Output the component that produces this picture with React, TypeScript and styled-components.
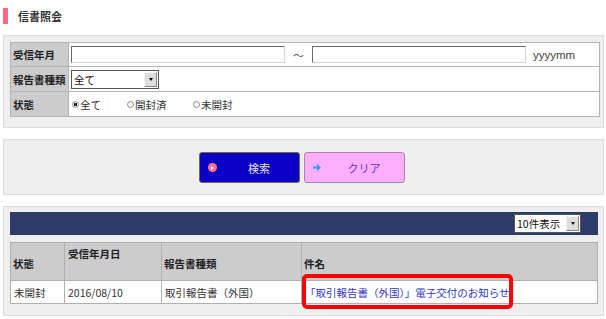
import React from "react";
import styled, { createGlobalStyle } from "styled-components";

const GlobalStyle = createGlobalStyle`
  body {
    margin: 0;
    background: #ffffff;
    font-family: "Noto Sans CJK JP", "Noto Sans", sans-serif;
    font-size: 10.5px;
    color: #222222;
  }
`;

const Page = styled.div`
  width: 606px;
  padding-left: 3px;
  box-sizing: border-box;
`;

const TitleBar = styled.div`
  display: flex;
  align-items: center;
  gap: 10px;
  height: 35px;
  padding-bottom: 3px;
  box-sizing: border-box;
`;

const TitleMark = styled.span`
  width: 5px;
  height: 16px;
  background: #ff6b86;
`;

const Title = styled.h1`
  margin: 0;
  font-size: 11px;
  font-weight: bold;
  color: #333333;
`;

const Section = styled.div<{ $height: number; $pad: string; $gap?: number }>`
  width: 601px;
  height: ${({ $height }) => $height}px;
  margin-bottom: ${({ $gap }) => $gap ?? 0}px;
  padding: ${({ $pad }) => $pad};
  box-sizing: border-box;
  background: #efefef;
  border: 1px solid #dcdcdc;
`;

const FormTable = styled.table`
  width: 590px;
  border-collapse: collapse;
  background: #ffffff;
  td {
    border: 1px solid #b4b4b4;
    padding: 0 2px;
  }
`;

const FormRow = styled.tr<{ $h: number }>`
  height: ${({ $h }) => $h}px;
`;

const LabelCell = styled.td`
  width: 53px;
  background: #cccccc;
  font-weight: bold;
  white-space: nowrap;
`;

const ValueCell = styled.td`
  white-space: nowrap;
`;

const FieldLine = styled.div`
  display: flex;
  align-items: center;
`;

const TextInput = styled.input`
  width: 214px;
  height: 17px;
  box-sizing: border-box;
  margin: 0;
  padding: 0 2px;
  border: 1px solid;
  border-color: #6a6a6a #d6d6d6 #d6d6d6 #6a6a6a;
  background: #ffffff;
  font: inherit;
`;

const Tilde = styled.span`
  width: 27px;
  text-align: center;
  color: #555555;
  font-size: 11px;
`;

const Hint = styled.span`
  margin-left: 7px;
  color: #444444;
  font-family: "Liberation Sans", Arial, sans-serif;
  font-size: 11.5px;
`;

const FakeSelect = styled.div<{ $w: number }>`
  display: flex;
  align-items: stretch;
  width: ${({ $w }) => $w}px;
  height: 19px;
  box-sizing: border-box;
  border: 1px solid #555555;
  background: #ffffff;
`;

const SelectText = styled.span`
  flex: 1;
  padding-left: 2px;
  display: flex;
  align-items: center;
  color: #111111;
`;

const SelectArrow = styled.span`
  width: 11px;
  margin: 1px;
  display: flex;
  align-items: center;
  justify-content: center;
  background: #dddddd;
  border: 1px solid;
  border-color: #f4f4f4 #888888 #888888 #f4f4f4;
  &::after {
    content: "";
    border-left: 2px solid transparent;
    border-right: 2px solid transparent;
    border-top: 3px solid #000000;
  }
`;

const RadioGroup = styled.div`
  display: flex;
  align-items: center;
  padding-left: 1px;
`;

const RadioItem = styled.label<{ $w: number }>`
  display: flex;
  align-items: center;
  width: ${({ $w }) => $w}px;
  color: #333333;
`;

const RadioDot = styled.span<{ $checked?: boolean }>`
  width: 5px;
  height: 5px;
  margin-right: 1px;
  border-radius: 50%;
  border: 1px solid #8a8a8a;
  background: ${({ $checked }) => ($checked ? "radial-gradient(circle, #222 45%, #fff 55%)" : "#ffffff")};
`;

const ButtonRow = styled.div`
  display: flex;
  justify-content: center;
  gap: 4px;
  padding-right: 4px;
`;

const ActionButton = styled.button<{ $bg: string; $border: string; $color: string }>`
  position: relative;
  width: 101px;
  height: 31px;
  margin: 0;
  padding: 0 0 0 20px;
  border-radius: 3px;
  border: 1px solid ${({ $border }) => $border};
  background: ${({ $bg }) => $bg};
  color: ${({ $color }) => $color};
  font: inherit;
  font-size: 11px;
  display: flex;
  align-items: center;
  justify-content: center;
`;

const PlayIcon = styled.span`
  position: absolute;
  left: 8px;
  top: 10px;
  width: 9px;
  height: 9px;
  border-radius: 50%;
  background: #ff6f86;
  display: flex;
  align-items: center;
  justify-content: center;
  &::after {
    content: "";
    margin-left: 1px;
    border-top: 2px solid transparent;
    border-bottom: 2px solid transparent;
    border-left: 3px solid #ffffff;
  }
`;

const ArrowIcon = styled.span`
  position: absolute;
  left: 8px;
  top: 11px;
  width: 8px;
  height: 7px;
  display: flex;
  align-items: center;
`;

const ResultBar = styled.div`
  display: flex;
  align-items: center;
  justify-content: flex-end;
  width: 588px;
  height: 23px;
  padding-right: 17px;
  box-sizing: border-box;
  background: #2c3b67;
  margin-bottom: 7px;
`;

const ResultTable = styled.table`
  width: 588px;
  border-collapse: collapse;
  background: #ffffff;
  th,
  td {
    border: 1px solid #b0b0b0;
    text-align: left;
    white-space: nowrap;
  }
`;

const HeadRow = styled.tr`
  height: 38px;
`;

const HeadCell = styled.th<{ $w?: number; $top?: boolean }>`
  ${({ $w }) => ($w ? `width: ${$w}px;` : "")}
  padding: ${({ $top }) => ($top ? "3px 3px 0" : "3px 2px 0")};
  vertical-align: ${({ $top }) => ($top ? "top" : "middle")};
  background: #cccccc;
  font-weight: bold;
  color: #222222;
`;

const BodyRow = styled.tr`
  height: 23px;
`;

const BodyCell = styled.td`
  padding: 0 3px;
  color: #333333;
  position: relative;
`;

const SubjectLink = styled.a`
  color: #3535c8;
  text-decoration: none;
`;

const Highlight = styled.span`
  position: absolute;
  left: 0;
  top: -7px;
  width: 211px;
  height: 35px;
  box-sizing: border-box;
  border: 4px solid #ff0000;
  border-radius: 5px;
  pointer-events: none;
`;

const App: React.FC = () => {
  return (
    <Page>
      <GlobalStyle />
      <TitleBar>
        <TitleMark />
        <Title>信書照会</Title>
      </TitleBar>

      <Section $height={93} $pad="6px 0 0 6px" $gap={11}>
        <FormTable>
          <tbody>
            <FormRow $h={24}>
              <LabelCell>受信年月</LabelCell>
              <ValueCell>
                <FieldLine>
                  <TextInput />
                  <Tilde>～</Tilde>
                  <TextInput />
                  <Hint>yyyymm</Hint>
                </FieldLine>
              </ValueCell>
            </FormRow>
            <FormRow $h={25}>
              <LabelCell>報告書種類</LabelCell>
              <ValueCell>
                <FakeSelect $w={88}>
                  <SelectText>全て</SelectText>
                  <SelectArrow />
                </FakeSelect>
              </ValueCell>
            </FormRow>
            <FormRow $h={25}>
              <LabelCell>状態</LabelCell>
              <ValueCell>
                <RadioGroup>
                  <RadioItem $w={55}>
                    <RadioDot $checked />
                    全て
                  </RadioItem>
                  <RadioItem $w={66}>
                    <RadioDot />
                    開封済
                  </RadioItem>
                  <RadioItem $w={60}>
                    <RadioDot />
                    未開封
                  </RadioItem>
                </RadioGroup>
              </ValueCell>
            </FormRow>
          </tbody>
        </FormTable>
      </Section>

      <Section $height={56} $pad="12px 0 0 0" $gap={11}>
        <ButtonRow>
          <ActionButton $bg="#0a00c6" $border="#6e6a3a" $color="#e6e0ff">
            <PlayIcon />
            検索
          </ActionButton>
          <ActionButton $bg="#ffadff" $border="#a487a8" $color="#6536b8">
            <ArrowIcon>
              <svg width="8" height="7" viewBox="0 0 8 7">
                <path d="M0 2.5h4V0l4 3.5L4 7V4.5H0z" fill="#2f9cf0" />
              </svg>
            </ArrowIcon>
            クリア
          </ActionButton>
        </ButtonRow>
      </Section>

      <Section $height={110} $pad="5px 0 0 6px">
        <ResultBar>
          <FakeSelect $w={67}>
            <SelectText>10件表示</SelectText>
            <SelectArrow />
          </FakeSelect>
        </ResultBar>
        <ResultTable>
          <thead>
            <HeadRow>
              <HeadCell $w={49}>状態</HeadCell>
              <HeadCell $w={90} $top>
                受信年月日
              </HeadCell>
              <HeadCell $w={135}>報告書種類</HeadCell>
              <HeadCell>件名</HeadCell>
            </HeadRow>
          </thead>
          <tbody>
            <BodyRow>
              <BodyCell>未開封</BodyCell>
              <BodyCell>2016/08/10</BodyCell>
              <BodyCell>取引報告書（外国）</BodyCell>
              <BodyCell>
                <SubjectLink href="#">「取引報告書（外国）」電子交付のお知らせ</SubjectLink>
                <Highlight />
              </BodyCell>
            </BodyRow>
          </tbody>
        </ResultTable>
      </Section>
    </Page>
  );
};

export default App;
